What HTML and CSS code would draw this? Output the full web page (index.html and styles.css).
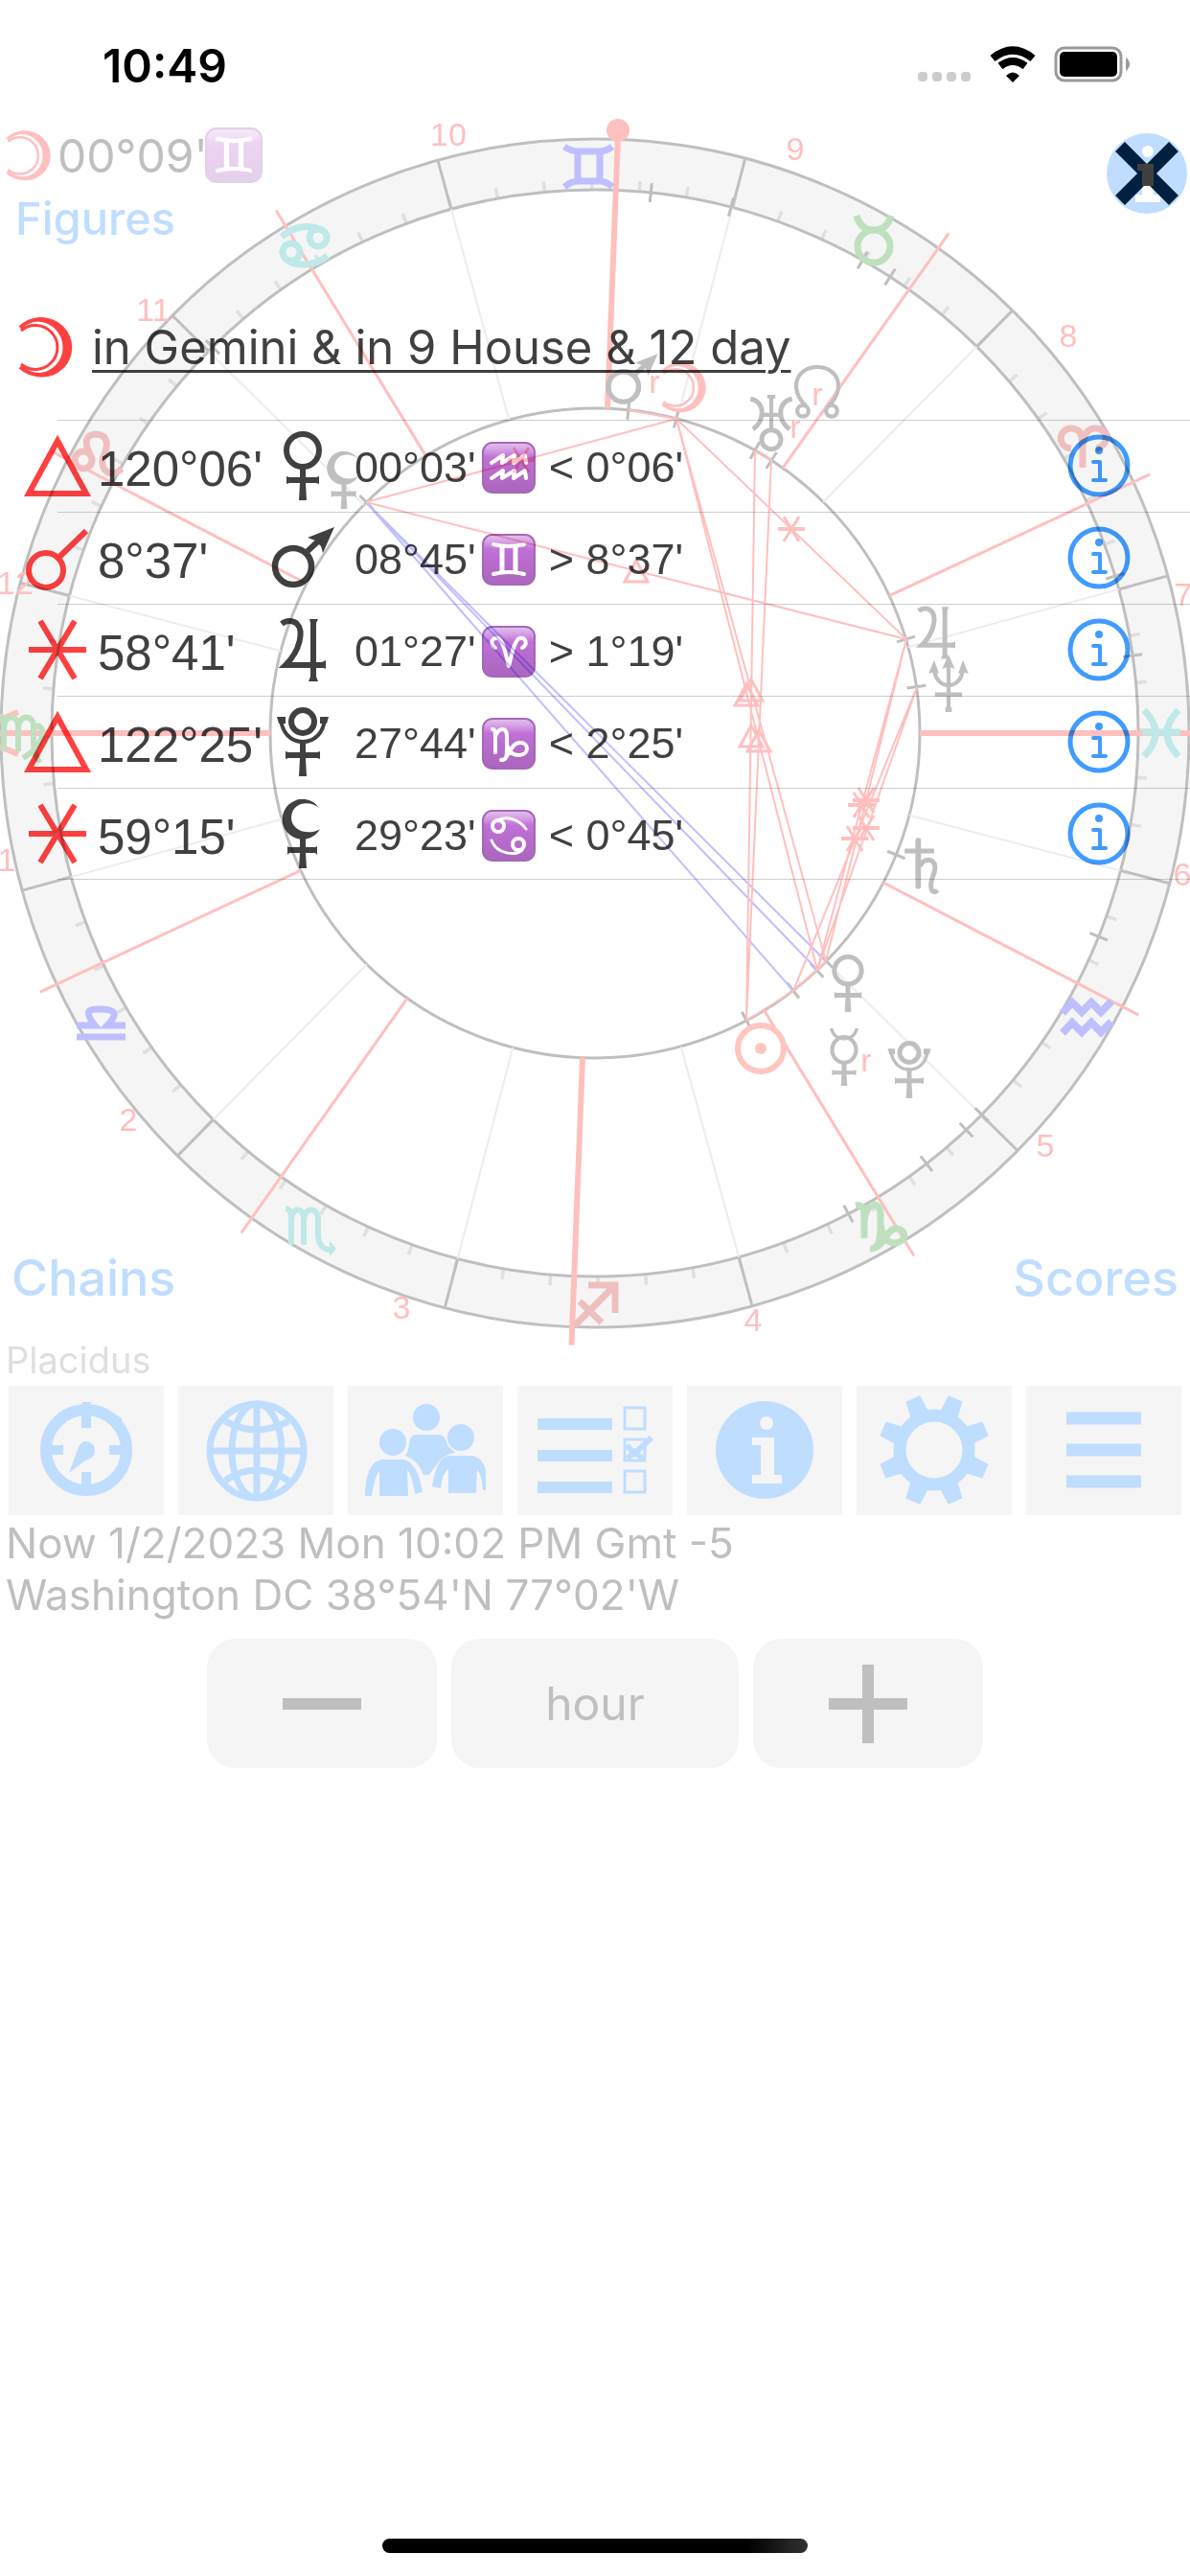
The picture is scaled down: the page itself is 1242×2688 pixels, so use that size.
FILE: index.html
```html
<!DOCTYPE html>
<html lang="en">
<head>
<meta charset="utf-8">
<meta name="viewport" content="width=device-width, initial-scale=1">
<title>Astrology chart</title>
<link rel="stylesheet" href="styles.css">
</head>
<body>
<svg class="defs" width="0" height="0" aria-hidden="true">
  <defs>
    <linearGradient id="tile" x1="0" y1="0" x2="0" y2="1">
      <stop offset="0" stop-color="#e3c0ec"/>
      <stop offset=".12" stop-color="#d8a6e6"/>
      <stop offset=".3" stop-color="#c070d6"/>
      <stop offset="1" stop-color="#a966bd"/>
    </linearGradient>
    <symbol id="moon" viewBox="0 0 72 72">
      <path fill="currentColor" d="M9 16A31 31 0 1 1 9 57A27 27 0 1 0 9 16Z"/>
      <path fill="none" stroke="currentColor" stroke-width="4" d="M9 16A32 32 0 0 1 29 7A29 29 0 0 1 29 65A32 32 0 0 1 9 57"/>
      <path fill="none" stroke="currentColor" stroke-width="3" d="M10 19A23 23 0 1 1 10 54"/>
    </symbol>
    <symbol id="venus" viewBox="0 0 72 72">
      <circle cx="36" cy="20" r="17" fill="none" stroke="currentColor" stroke-width="6"/>
      <path fill="currentColor" d="M33 39H39V48H50L53 47V55L50 54H39L40 72H32L33 54H22L19 55V47L22 48H33Z"/>
    </symbol>
    <symbol id="mars" viewBox="0 0 72 72">
      <circle cx="26" cy="45" r="19" fill="none" stroke="currentColor" stroke-width="6.500"/>
      <path fill="none" stroke="currentColor" stroke-width="6" d="M39 31L55 16"/>
      <path fill="currentColor" d="M69 4L41 15L49 18L55 24L57 31Z"/>
    </symbol>
    <symbol id="jupiter" viewBox="0 0 72 72">
      <path fill="none" stroke="currentColor" stroke-width="6" d="M14 9C20 4 27 6 30 9C37 16 34 36 18 52H60"/>
      <path fill="currentColor" d="M43 4H52L50 8V64L52 69H42L44 64V8ZM60 47V56L56 54V49Z"/>
    </symbol>
    <symbol id="pluto" viewBox="0 0 72 72">
      <circle cx="36" cy="15" r="12" fill="none" stroke="currentColor" stroke-width="6"/>
      <path fill="none" stroke="currentColor" stroke-width="4" d="M13 11C14 27 24 36 36 36C48 36 58 27 59 11"/>
      <path fill="currentColor" d="M9 10H18V17H11ZM63 10H54V17H61ZM33 35H39V47H51L54 46V54L51 53H39L40 72H32L33 53H21L18 54V46L21 47H33Z"/>
    </symbol>
    <symbol id="lilith" viewBox="0 0 72 72">
      <path fill="currentColor" d="M53 9A21 21 0 1 0 54 31C44 38 24 34 24 19C25 2 44 1 53 9Z"/>
      <path fill="currentColor" d="M33 38H39V50H49L51 49V58L49 56H39L40 72H32L33 56H22L20 58V49L22 50H33Z"/>
    </symbol>
    <symbol id="mercury" viewBox="0 0 72 72">
      <ellipse cx="36" cy="27" rx="15" ry="16" fill="none" stroke="currentColor" stroke-width="5"/>
      <path fill="none" stroke="currentColor" stroke-width="4" d="M20 0C22 9 28 13 36 13C44 13 50 9 52 0"/>
      <path fill="currentColor" d="M33 43H39V53H48L51 52V59L48 58H39L40 72H32L33 58H24L21 59V52L24 53H33Z"/>
    </symbol>
    <symbol id="uranus" viewBox="0 0 72 72">
      <circle cx="36" cy="56" r="12" fill="none" stroke="currentColor" stroke-width="6"/>
      <path fill="none" stroke="currentColor" stroke-width="6" d="M10 5C28 8 29 32 13 43M62 5C44 8 43 32 59 43"/>
      <path fill="none" stroke="currentColor" stroke-width="5" d="M36 1V45M24 25H48M31 2H41"/>
    </symbol>
    <symbol id="node" viewBox="0 0 72 72">
      <path fill="none" stroke="currentColor" stroke-width="5" d="M22 55C0 34 9 6 36 6C63 6 72 34 50 55"/>
      <circle cx="18" cy="61" r="7" fill="none" stroke="currentColor" stroke-width="5"/>
      <circle cx="54" cy="61" r="7" fill="none" stroke="currentColor" stroke-width="5"/>
    </symbol>
    <symbol id="neptune" viewBox="0 0 72 72">
      <path fill="none" stroke="currentColor" stroke-width="5" d="M36 8V72M19 50H53M18 16C18 46 54 46 54 16"/>
      <path fill="currentColor" d="M36 0L44 18L36 15L28 18ZM18 7L24 24L18 22L11 24ZM54 7L61 24L54 22L48 24ZM32 72H40V66H32Z"/>
    </symbol>
    <symbol id="saturn" viewBox="0 0 72 72">
      <path fill="none" stroke="currentColor" stroke-width="7" stroke-linecap="round" d="M34 5V62"/>
      <path fill="none" stroke="currentColor" stroke-width="6" d="M17 18H54M36 37C42 26 53 27 55 37C56 47 49 52 50 62C50 69 55 71 58 67"/>
    </symbol>
    <symbol id="trine" viewBox="0 0 72 72"><path fill="none" stroke="currentColor" stroke-width="6" d="M36 10L66 65H6Z"/></symbol>
    <symbol id="conjunction" viewBox="0 0 72 72"><path fill="none" stroke="currentColor" stroke-width="6" d="M37 36L66 8"/><circle cx="24" cy="49" r="18" fill="none" stroke="currentColor" stroke-width="6"/></symbol>
    <symbol id="sextile" viewBox="0 0 72 72"><path fill="none" stroke="currentColor" stroke-width="6" d="M6 36H66M18 6L54 66M54 6L18 66"/></symbol>
    <symbol id="m-tri" viewBox="0 0 30 30" overflow="visible"><path fill="none" stroke="currentColor" stroke-width="3" d="M15 5L27 27H3Z"/></symbol>
    <symbol id="m-sex" viewBox="0 0 30 30" overflow="visible"><path fill="none" stroke="currentColor" stroke-width="4" d="M1 15H29"/><path fill="none" stroke="currentColor" stroke-width="3" d="M7 2L23 28M23 2L7 28"/></symbol>
    <symbol id="t-base" viewBox="0 0 56 54"><rect x="1" y="1" width="54" height="52" rx="10" fill="url(#tile)" stroke="#a566b8" stroke-width="2"/></symbol>
    <symbol id="t-gemini" viewBox="0 0 56 54"><use href="#t-base"/><path fill="none" stroke="#fff" stroke-width="5" d="M21 13V41M35 13V41"/><path fill="none" stroke="#fff" stroke-width="4" stroke-linecap="round" d="M12 11Q28 15 44 11M12 42Q28 38 44 42"/></symbol>
    <symbol id="t-aquarius" viewBox="0 0 56 54"><use href="#t-base"/><path fill="none" stroke="#fff" stroke-width="4" stroke-linecap="round" stroke-linejoin="round" d="M10 22L22 14L21 22L34 14L33 22L45 14L46 22M10 38L22 30L21 38L34 30L33 38L45 30L46 38"/></symbol>
    <symbol id="t-aries" viewBox="0 0 56 54"><use href="#t-base"/><path fill="none" stroke="#fff" stroke-width="4" stroke-linecap="round" stroke-linejoin="round" d="M14 23C7 19 11 11 17 13C23 16 25 32 28 42C31 32 33 16 39 13C45 11 49 19 42 23"/></symbol>
    <symbol id="t-capricorn" viewBox="0 0 56 54"><use href="#t-base"/><path fill="none" stroke="#fff" stroke-width="4" stroke-linecap="round" d="M11 12C14 12 14 16 14 20V36M14 20C17 10 26 9 26 19V32C26 42 25 44 20 44M26 28C28 36 33 39 39 39C50 38 49 26 40 26C33 26 31 32 26 40"/></symbol>
    <symbol id="t-cancer" viewBox="0 0 56 54"><use href="#t-base"/><path fill="none" stroke="#fff" stroke-width="3" stroke-linecap="round" d="M16 11C26 6 39 10 46 20M10 32C16 47 35 48 42 42"/><circle cx="17" cy="17" r="6" fill="none" stroke="#fff" stroke-width="4"/><circle cx="38" cy="36" r="6" fill="none" stroke="#fff" stroke-width="4"/></symbol>
    <symbol id="info" viewBox="0 0 66 66"><circle cx="33" cy="33" r="30" fill="none" stroke="currentColor" stroke-width="5"/><circle cx="33" cy="17" r="4" fill="currentColor"/><path fill="none" stroke="currentColor" stroke-width="4" stroke-linecap="round" stroke-linejoin="round" d="M27 29H34V48M27 48H40"/></symbol>
  </defs>
</svg>

<main class="app">
  <header class="status">
    <time class="clock">10:49</time>
    <svg class="status-icons" viewBox="0 0 224 48" role="img" aria-label="Signal, Wi-Fi, battery">
      <g fill="#ccc"><rect x="0" y="31" width="10" height="10" rx="4"/><rect x="15" y="31" width="10" height="10" rx="4"/><rect x="30" y="31" width="10" height="10" rx="4"/><rect x="45" y="31" width="10" height="10" rx="4"/></g>
      <g fill="none" stroke="#000"><path stroke-width="8" d="M78 17Q99 0 120 17"/><path stroke-width="8" d="M86 25Q99 15 112 25"/></g>
      <path d="M92 35Q99 28 106 35L99 42Z"/>
      <rect x="144" y="6" width="68" height="34" rx="9" fill="none" stroke="#999" stroke-width="3"/><rect x="148" y="10" width="60" height="26" rx="5"/><path fill="#999" d="M217 16Q221 19 221 23T217 30Z"/>
    </svg>
  </header>

  <section class="chart">
    <svg class="wheel" viewBox="0 120 1242 1290" role="img" aria-label="Chart wheel">
      <g transform="translate(621 765)" fill="none">
        <circle r="594" stroke="#f5f5f5" stroke-width="54"/>
        <circle r="572" stroke="#dfdfdf" stroke-width="12" pathLength="360" stroke-dasharray=".35 4.650" transform="rotate(-15.500)"/>
        <g stroke="#bfbfbf" stroke-width="3"><circle r="620"/><circle r="567"/><circle r="339"/></g>
        <g stroke="#ececec" stroke-width="2">
          <path d="M339 0H567" transform="rotate(-15.350)"/><path d="M339 0H567" transform="rotate(-45.350)"/><path d="M339 0H567" transform="rotate(-75.350)"/><path d="M339 0H567" transform="rotate(-105.350)"/><path d="M339 0H567" transform="rotate(-135.350)"/><path d="M339 0H567" transform="rotate(-165.350)"/><path d="M339 0H567" transform="rotate(-195.350)"/><path d="M339 0H567" transform="rotate(-225.350)"/><path d="M339 0H567" transform="rotate(-255.350)"/><path d="M339 0H567" transform="rotate(-285.350)"/><path d="M339 0H567" transform="rotate(-315.350)"/><path d="M339 0H567" transform="rotate(-345.350)"/>
        </g>
        <g stroke="#bfbfbf" stroke-width="3">
          <path d="M567 0H620" transform="rotate(-15.350)"/><path d="M567 0H620" transform="rotate(-45.350)"/><path d="M567 0H620" transform="rotate(-75.350)"/><path d="M567 0H620" transform="rotate(-105.350)"/><path d="M567 0H620" transform="rotate(-135.350)"/><path d="M567 0H620" transform="rotate(-165.350)"/><path d="M567 0H620" transform="rotate(-195.350)"/><path d="M567 0H620" transform="rotate(-225.350)"/><path d="M567 0H620" transform="rotate(-255.350)"/><path d="M567 0H620" transform="rotate(-285.350)"/><path d="M567 0H620" transform="rotate(-315.350)"/><path d="M567 0H620" transform="rotate(-345.350)"/>
        </g>
        <g stroke="#bfbfbf" stroke-width="3">
          <path d="M329 0H349M557 0H577" transform="rotate(-84.100)"/><path d="M329 0H349M557 0H577" transform="rotate(-75.500)"/><path d="M329 0H349M557 0H577" transform="rotate(-60.500)"/><path d="M329 0H349M557 0H577" transform="rotate(-57.100)"/><path d="M329 0H349M557 0H577" transform="rotate(-16.800)"/><path d="M329 0H349M557 0H577" transform="rotate(-8.200)"/><path d="M329 0H349M557 0H577" transform="rotate(22)"/><path d="M329 0H349M557 0H577" transform="rotate(44.600)"/><path d="M329 0H349M557 0H577" transform="rotate(46.900)"/><path d="M329 0H349M557 0H577" transform="rotate(52.400)"/><path d="M329 0H349M557 0H577" transform="rotate(62.200)"/><path d="M329 0H349M557 0H577" transform="rotate(-134.730)"/>
        </g>
        <g stroke="#ffbfbf" stroke-width="3">
          <path d="M339 0H639" transform="rotate(-25)"/><path d="M339 0H639" transform="rotate(-54.700)"/><path d="M339 0H639" transform="rotate(-121.400)"/><path d="M339 0H639" transform="rotate(-152.600)"/><path d="M339 0H639" transform="rotate(-205)"/><path d="M339 0H639" transform="rotate(-234.700)"/><path d="M339 0H639" transform="rotate(58.600)"/><path d="M339 0H639" transform="rotate(27.400)"/>
        </g>
        <g stroke="#ffbfbf" stroke-width="6"><path d="M339 0H660"/><path d="M-339 0H-660M-602 -22L-640 -6M-602 22L-640 6"/><path d="M339 0H630" transform="rotate(-87.800)"/><path d="M339 0H639" transform="rotate(92.200)"/></g>
        <circle cx="24" cy="-629" r="12" fill="#ffbfbf"/>
      </g>
      <g fill="none" stroke="#bfbfff" stroke-width="2"><path d="M382 524L862 1003M382 524L853 1012M382 524L828 1034"/></g>
      <g fill="none" stroke="#ffbfbf" stroke-width="2"><path d="M382 524L706 437L656 428M706 437L946 667L382 524M862 1003L706 437L853 1012M788 470L779 1065L805 480L788 470M862 1003L946 667L853 1012L957 717L828 1034M779 1065L828 1034L853 1012L862 1003"/></g>
      <g color="#ffbfbf">
        <use href="#m-sex" x="529" y="465" width="30" height="30"/><use href="#m-sex" x="811" y="537" width="30" height="30"/><use href="#m-sex" x="889" y="820" width="30" height="30"/><use href="#m-sex" x="884" y="825" width="30" height="30"/><use href="#m-sex" x="889" y="849" width="30" height="30"/><use href="#m-sex" x="877" y="860" width="30" height="30"/>
        <use href="#m-tri" x="649" y="580" width="30" height="30"/><use href="#m-tri" x="769" y="704" width="30" height="30"/><use href="#m-tri" x="764" y="709" width="30" height="30"/><use href="#m-tri" x="769" y="752" width="30" height="30"/><use href="#m-tri" x="777" y="757" width="30" height="30"/>
        <use href="#moon" x="684" y="374" width="60" height="60"/>
      </g>
      <g color="#bfbfbf">
        <use href="#mars" x="629" y="366" width="60" height="60"/><use href="#uranus" x="775" y="412" width="60" height="60"/><use href="#node" x="823" y="378" width="60" height="60"/><use href="#jupiter" x="947" y="630" width="60" height="60"/><use href="#neptune" x="960" y="683" width="60" height="60"/><use href="#saturn" x="930" y="873" width="60" height="60"/><use href="#venus" x="855" y="996" width="60" height="60"/><use href="#mercury" x="851" y="1073" width="60" height="60"/><use href="#pluto" x="919" y="1086" width="60" height="60"/><use href="#lilith" x="329" y="471" width="60" height="60"/>
      </g>
      <circle cx="794" cy="1094" r="24" fill="none" stroke="#ffc5bf" stroke-width="6"/><circle cx="794" cy="1094" r="6" fill="#ffc5bf"/>
      <g fill="none" stroke-width="7">
        <g stroke="#bfbfff">
          <path d="M603 155V192M626 155V192M589 153Q596 158 604 158H625Q633 158 639 153M589 195Q596 189 604 189H625Q633 189 639 195"/>
          <path d="M80 1082H131M80 1070H99C85 1052 96 1053 105 1053C117 1053 126 1056 112 1070H131"/>
          <path stroke-width="8" d="M1109 1057L1119 1046L1129 1056L1139 1046L1149 1056L1160 1045M1109 1078L1119 1067L1129 1077L1139 1067L1149 1077L1160 1066"/>
        </g>
        <g stroke="#bfe8e8">
          <path d="M294 247C308 235 324 234 336 240M342 267C328 278 308 279 298 270"/><circle cx="332" cy="248" r="9"/><circle cx="304" cy="263" r="9"/>
          <path stroke-width="6" d="M298 1261C304 1262 304 1268 304 1274V1299M304 1274C304 1259 317 1259 317 1272V1299M317 1274C317 1259 332 1259 332 1272V1288C332 1298 337 1304 344 1304"/><path fill="#bfe8e8" stroke="none" d="M344 1295L351 1303L344 1311Z"/>
          <path d="M1194 741Q1218 765 1194 789M1230 741Q1206 765 1230 789M1192 764H1232"/>
        </g>
        <g stroke="#efbfbf">
          <circle cx="87" cy="480" r="9"/><path d="M94 474Q84 454 100 453C114 454 113 466 108 476C103 490 115 500 127 489"/>
          <path d="M614 1341H642V1370M641 1342L600 1383M605 1358L628 1380"/>
          <path d="M1118 468C1102 466 1105 446 1119 447C1131 448 1130 458 1130 488V470C1130 458 1132 448 1142 447C1158 446 1158 466 1144 468"/>
        </g>
        <g stroke="#bfe0bf">
          <path stroke-width="6" d="M-2 747C4 748 4 753 4 758V784M4 760C4 745 19 745 19 758V784M19 760C19 745 35 745 35 758V775C35 786 38 788 41 796M35 760C46 750 52 775 24 791"/>
          <circle cx="912" cy="257" r="17"/><path d="M894 225Q898 240 912 240T930 225"/>
          <path d="M893 1258C903 1256 902 1265 902 1276V1292M902 1276C903 1254 918 1252 919 1266V1280C919 1297 915 1304 908 1303M919 1277C921 1293 928 1297 934 1297C948 1296 946 1281 934 1282C925 1284 925 1296 914 1302"/>
        </g>
      </g>
      <g class="house-labels">
        <text x="468" y="152">10</text><text x="830" y="167">9</text><text x="1115" y="362">8</text><text x="1235" y="632">7</text><text x="1234" y="924">6</text><text x="1091" y="1207">5</text><text x="786" y="1389">4</text><text x="419" y="1376">3</text><text x="134" y="1180">2</text><text x="7" y="909">1</text><text x="16" y="620">12</text><text x="160" y="335">11</text>
        <text x="683" y="410">r</text><text x="853" y="423">r</text><text x="830" y="457">r</text><text x="904" y="1118">r</text>
      </g>
    </svg>

    <div class="chart-top">
      <div>
        <p class="now-moon"><svg class="ico60 pink"><use href="#moon"/></svg><span>00°09'</span><svg class="ico60 faded"><use href="#t-gemini"/></svg></p>
        <button class="link small" type="button">Figures</button>
      </div>
      <button class="close" type="button" aria-label="Close">
        <svg viewBox="0 0 84 84"><circle cx="42" cy="42" r="42" fill="#bfddff"/><circle cx="43" cy="19" r="6" fill="#fff"/><path fill="#fff" d="M30 32H49V64H56V72H30V64H37V39H30Z"/><path fill="none" stroke="#002040" stroke-width="14" d="M14 14L70 70M70 14L14 70"/><path fill="#404040" d="M32 32H49V55H37V39H32Z"/></svg>
      </button>
    </div>

    <section class="detail">
      <h1 class="detail-title"><svg class="ico72 red"><use href="#moon"/></svg><span>in Gemini &amp; in 9 House &amp; 12 day</span></h1>
      <ul class="aspects">
        <li><svg class="ico72 red"><use href="#trine"/></svg><span class="angle">120°06'</span><svg class="ico72"><use href="#venus"/></svg><span class="pos">00°03'<svg class="tile"><use href="#t-aquarius"/></svg>&lt; 0°06'</span><button class="info" type="button" aria-label="Info"><svg><use href="#info"/></svg></button></li>
        <li><svg class="ico72 red"><use href="#conjunction"/></svg><span class="angle">8°37'</span><svg class="ico72"><use href="#mars"/></svg><span class="pos">08°45'<svg class="tile"><use href="#t-gemini"/></svg>&gt; 8°37'</span><button class="info" type="button" aria-label="Info"><svg><use href="#info"/></svg></button></li>
        <li><svg class="ico72 red"><use href="#sextile"/></svg><span class="angle">58°41'</span><svg class="ico72"><use href="#jupiter"/></svg><span class="pos">01°27'<svg class="tile"><use href="#t-aries"/></svg>&gt; 1°19'</span><button class="info" type="button" aria-label="Info"><svg><use href="#info"/></svg></button></li>
        <li><svg class="ico72 red"><use href="#trine"/></svg><span class="angle">122°25'</span><svg class="ico72"><use href="#pluto"/></svg><span class="pos">27°44'<svg class="tile"><use href="#t-capricorn"/></svg>&lt; 2°25'</span><button class="info" type="button" aria-label="Info"><svg><use href="#info"/></svg></button></li>
        <li><svg class="ico72 red"><use href="#sextile"/></svg><span class="angle">59°15'</span><svg class="ico72"><use href="#lilith"/></svg><span class="pos">29°23'<svg class="tile"><use href="#t-cancer"/></svg>&lt; 0°45'</span><button class="info" type="button" aria-label="Info"><svg><use href="#info"/></svg></button></li>
      </ul>
    </section>

    <div class="chart-bottom"><button class="link" type="button">Chains</button><button class="link" type="button">Scores</button></div>
  </section>

  <p class="system">Placidus</p>

  <nav class="toolbar">
    <button type="button" aria-label="Chart"><svg viewBox="0 0 162 135"><circle cx="81" cy="67" r="42" fill="none" stroke="currentColor" stroke-width="12"/><path fill="none" stroke="currentColor" stroke-width="10" d="M81 20V44M81 90V114M38 67H57M105 67H124"/><path fill="currentColor" d="M76 17H87L81 24ZM112 30L118 34V42ZM63 91L73 64Q76 57 82 58Q90 60 90 68Q89 76 80 78Z"/></svg></button>
    <button type="button" aria-label="World"><svg viewBox="0 0 162 135"><g fill="none" stroke="currentColor" stroke-width="7"><circle cx="82" cy="68" r="49"/><ellipse cx="82" cy="68" rx="26" ry="49"/><path d="M82 18V117M33 68H131M49 37Q82 55 115 37M49 99Q82 77 115 99"/></g></svg></button>
    <button type="button" aria-label="People"><svg viewBox="0 0 162 135" fill="currentColor"><circle cx="82" cy="33" r="14"/><circle cx="47" cy="59" r="14"/><circle cx="118" cy="54" r="14"/><path d="M64 61Q65 51 71 51H96Q102 52 104 62L112 70Q100 71 93 82Q86 91 85 93H79Q74 78 60 73Q63 69 64 61Z"/><path d="M18 113Q19 78 37 77H58Q73 80 78 111L70 113Q67 92 62 88L63 115H33V89Q28 94 25 115H18Z"/><path d="M88 105Q93 73 106 73H130Q142 76 144 89V109H141Q140 94 135 87L134 112H105V87Q98 92 97 107Z"/></svg></button>
    <button type="button" aria-label="Lists"><svg viewBox="0 0 162 135"><path stroke="currentColor" stroke-width="12" d="M21 40H99M21 73H99M21 106H99"/><path fill="none" stroke="currentColor" stroke-width="3" d="M112 23H133V45H112ZM112 56H133V78H112ZM112 89H133V111H112Z"/><path fill="none" stroke="currentColor" stroke-width="6" d="M114 62L122 71L140 54M115 76L122 69L132 77"/></svg></button>
    <button type="button" aria-label="Information"><svg viewBox="0 0 162 135"><circle cx="81" cy="67" r="51" fill="currentColor"/><circle cx="83" cy="39" r="7" fill="#f5f5f5"/><path fill="#f5f5f5" d="M68 54H91V93H99V102H68V93H77V62H68Z"/></svg></button>
    <button type="button" aria-label="Settings"><svg viewBox="0 0 162 135"><g transform="translate(81 67)" fill="currentColor"><circle r="36" fill="none" stroke="currentColor" stroke-width="13"/><path d="M-10 -38L-8 -58H8L10 -38ZM-10 38L-8 58H8L10 38Z" transform="rotate(22.500)"/><path d="M-10 -38L-8 -58H8L10 -38ZM-10 38L-8 58H8L10 38Z" transform="rotate(67.500)"/><path d="M-10 -38L-8 -58H8L10 -38ZM-10 38L-8 58H8L10 38Z" transform="rotate(112.500)"/><path d="M-10 -38L-8 -58H8L10 -38ZM-10 38L-8 58H8L10 38Z" transform="rotate(157.500)"/></g></svg></button>
    <button type="button" aria-label="Menu"><svg viewBox="0 0 162 135"><path stroke="currentColor" stroke-width="13" d="M42 34H120M42 67H120M42 100H120"/></svg></button>
  </nav>

  <p class="moment">Now 1/2/2023 Mon 10:02 PM Gmt -5<br>Washington DC 38°54'N 77°02'W</p>

  <div class="stepper">
    <button type="button" aria-label="Back"><svg viewBox="0 0 84 84"><path stroke="currentColor" stroke-width="12" d="M1 42H83"/></svg></button>
    <button class="unit" type="button">hour</button>
    <button type="button" aria-label="Forward"><svg viewBox="0 0 84 84"><path stroke="currentColor" stroke-width="12" d="M1 42H83M42 1V83"/></svg></button>
  </div>

  <div class="home-bar"></div>
</main>
</body>
</html>
```

FILE: styles.css
```css
* { box-sizing: border-box; }

body {
  margin: 0;
  background: #fff;
  color: #404040;
  font-family: Inter, "Liberation Sans", sans-serif;
}

p, h1, ul { margin: 0; padding: 0; }

button {
  border: 0;
  padding: 0;
  background: none;
  color: inherit;
  font: inherit;
}

svg { display: block; flex: none; }

.defs { position: absolute; }

.app {
  display: flex;
  flex-direction: column;
  min-height: 100vh;
}

/* status bar */
.status {
  display: flex;
  justify-content: space-between;
  align-items: center;
  height: 120px;
  padding: 16px 60px 0 107px;
  color: #000;
}
.clock { font-size: 48px; font-weight: 600; }
.status-icons { width: 224px; height: 48px; }

/* chart and everything laid over it */
.chart { display: grid; }
.chart > * { grid-area: 1 / 1; }
.wheel { width: 100%; height: auto; }

.house-labels {
  fill: #ffbfbf;
  font: 34px "Liberation Sans", sans-serif;
  text-anchor: middle;
}

.chart-top {
  display: flex;
  justify-content: space-between;
  align-items: flex-start;
  align-self: start;
  padding: 12px 3px 0 0;
}
.now-moon {
  display: flex;
  align-items: center;
  height: 60px;
  color: #bfbfbf;
  font-size: 48px;
}
.now-moon span { width: 154px; }
.ico60 { width: 60px; height: 60px; }
.ico72 { width: 72px; height: 72px; }
.pink { color: #ffbfbf; }
.red { color: #ff4040; }
.faded { opacity: .3; }

.link {
  color: #bfddff;
  font-size: 52px;
  font-weight: 500;
  line-height: 60px;
}
.link.small {
  padding: 6px 0 0 16px;
  font-size: 47px;
}
.close { width: 84px; height: 84px; margin-top: 7px; }

.chart-bottom {
  display: flex;
  justify-content: space-between;
  align-self: end;
  padding: 0 12px 46px;
}

/* aspect details */
.detail {
  align-self: start;
  padding-top: 206px;
  mix-blend-mode: multiply;
}
.detail-title {
  display: flex;
  align-items: center;
  gap: 12px;
  height: 112px;
  padding: 0 0 40px 12px;
  font-size: 49px;
  font-weight: 400;
}
.detail-title span {
  text-decoration: underline;
  text-decoration-thickness: 3px;
  text-underline-offset: 6px;
}
.aspects {
  list-style: none;
  background: linear-gradient(#cfcfcf, #cfcfcf) 60px 100% / 100% 1px no-repeat;
}
.aspects li {
  display: grid;
  grid-template-columns: 72px 172px 72px 1fr 66px;
  column-gap: 6px;
  align-items: center;
  height: 96px;
  padding: 0 62px 0 24px;
  background: linear-gradient(#cfcfcf, #cfcfcf) 60px 0 / 100% 1px no-repeat;
  font-family: "Liberation Sans", sans-serif;
}
.angle {
  padding-top: 6px;
  font-size: 51px;
  white-space: nowrap;
}
.pos {
  display: flex;
  align-items: center;
  padding: 4px 0 0 12px;
  font-size: 45px;
}
.tile { width: 56px; height: 54px; margin: 0 14px 0 6px; }
.info { color: #409bff; }
.info svg { width: 66px; height: 66px; }

/* below the chart */
.system {
  height: 36px;
  padding-left: 6px;
  color: #dfdfdf;
  font-size: 38px;
  line-height: 18px;
}
.toolbar {
  display: grid;
  grid-template-columns: repeat(7, 1fr);
  gap: 15px;
  padding: 0 9px;
}
.toolbar button {
  height: 135px;
  background: #f5f5f5;
  color: #bfddff;
}
.toolbar svg { width: 100%; height: 135px; }

.moment {
  padding: 2px 6px 0;
  color: #bfbfbf;
  font-size: 44px;
  line-height: 54px;
}
.stepper {
  display: grid;
  grid-template-columns: 240px 300px 240px;
  gap: 15px;
  justify-content: center;
  padding-top: 19px;
  color: #bfbfbf;
}
.stepper button {
  display: grid;
  place-items: center;
  height: 135px;
  border-radius: 30px;
  background: #f5f5f5;
}
.stepper svg { width: 84px; height: 84px; }
.stepper .unit { font-size: 48px; }

.home-bar {
  width: 444px;
  height: 15px;
  margin: auto auto 24px;
  border-radius: 8px;
  background: linear-gradient(90deg, #000 86%, #333);
}
```
